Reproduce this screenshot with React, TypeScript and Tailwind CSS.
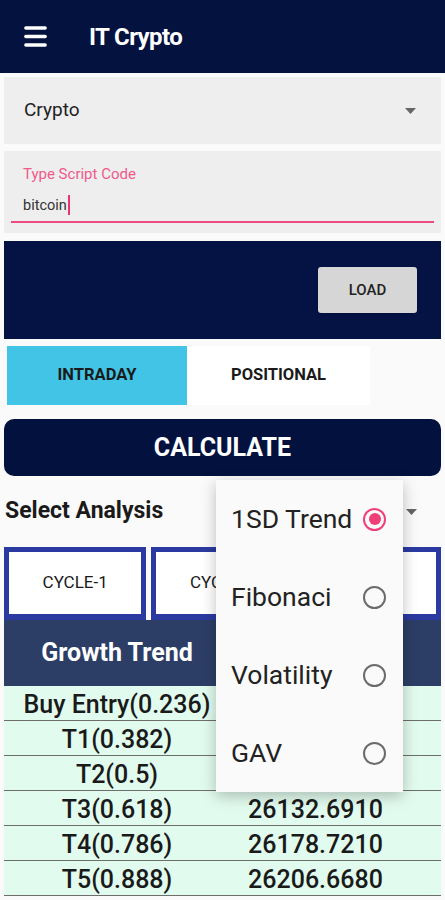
import { Menu } from 'lucide-react';

const rows = [
  { label: 'Buy Entry(0.236)', value: '' },
  { label: 'T1(0.382)', value: '' },
  { label: 'T2(0.5)', value: '' },
  { label: 'T3(0.618)', value: '26132.6910' },
  { label: 'T4(0.786)', value: '26178.7210' },
  { label: 'T5(0.888)', value: '26206.6680' },
];

const options = ['1SD Trend', 'Fibonaci', 'Volatility', 'GAV'];

function Caret() {
  return (
    <svg width="11" height="6" viewBox="0 0 11 6" className="text-[#666]">
      <path d="M0 0h11L5.5 6z" fill="currentColor" />
    </svg>
  );
}

function Radio({ checked }: { checked: boolean }) {
  return checked ? (
    <span className="flex h-[23px] w-[23px] shrink-0 items-center justify-center rounded-full border-2 border-[#ee3f78]">
      <span className="h-[12px] w-[12px] rounded-full bg-[#ee3f78]" />
    </span>
  ) : (
    <span className="h-[23px] w-[23px] shrink-0 rounded-full border-2 border-[#6b6b6b]" />
  );
}

export default function App() {
  return (
    <div className="relative min-h-[900px] bg-[#fafafa] font-['Roboto',sans-serif]">
      <header className="flex h-[73px] items-center bg-[#03123f] pl-[21px] text-white">
        <Menu size={29} strokeWidth={2.8} />
        <h1 className="ml-[39px] text-[24px] font-bold tracking-tight">IT Crypto</h1>
      </header>

      <div className="mx-1 mt-1 flex h-[67px] items-center justify-between bg-[#eeeeee] pl-5 pr-[25px]">
        <span className="text-[19px] text-[#222]">Crypto</span>
        <Caret />
      </div>

      <div className="mx-1 mt-[7px] h-[82px] bg-[#eeeeee] px-[7px] pt-[12px]">
        <div className="pl-[12px] text-[15px] text-[#ef5a8b]">Type Script Code</div>
        <div className="mt-[9px] flex items-center pl-[12px] text-[14.5px] text-[#333]">
          bitcoin<span className="ml-px h-[20px] w-[2px] bg-[#e8336f]" />
        </div>
        <div className="mt-[5px] h-[2px] bg-[#ec4a80]" />
      </div>

      <div className="mx-1 mt-2 flex h-[98px] items-center justify-end bg-[#041344] pr-6">
        <button className="h-[46px] w-[99px] rounded-[3px] bg-[#d6d6d6] text-[15px] font-medium text-[#222] shadow">LOAD</button>
      </div>

      <div className="mx-[7px] mt-[7px] flex h-[59px]">
        <div className="flex w-[180px] items-center justify-center bg-[#41c4e5] text-[16.5px] font-bold text-[#1a1a1a]">INTRADAY</div>
        <div className="flex w-[183px] items-center justify-center bg-white text-[16.5px] font-bold text-[#1a1a1a]">POSITIONAL</div>
      </div>

      <button className="mx-1 mt-[14px] flex h-[57px] w-[437px] items-center justify-center rounded-[10px] bg-[#03113f] text-[25px] font-bold text-white">CALCULATE</button>

      <div className="flex h-[71px] items-center justify-between pl-[5px] pr-[28px]">
        <span className="text-[23px] font-bold text-[#1a1a1a]">Select Analysis</span>
        <Caret />
      </div>

      <div className="mx-1 grid h-[73px] grid-cols-3 gap-[5px]">
        {['CYCLE-1', 'CYCLE-2', 'CYCLE-3'].map(c => (
          <div key={c} className="bg-[#2a3aa0] px-[5px] pt-[5px] pb-[6px]">
            <div className="flex h-full items-center justify-center bg-white text-[17px] text-[#1a1a1a]">{c}</div>
          </div>
        ))}
      </div>

      <div className="mx-1 grid h-[66px] grid-cols-[226px_1fr] items-center bg-[#2d3e66] text-white">
        <span className="text-center text-[25px] font-bold">Growth Trend</span>
        <span />
      </div>

      <div className="mx-1">
        {rows.map(r => (
          <div key={r.label} className="grid h-[35px] grid-cols-[226px_171px] items-center border-b-[1.5px] border-[#6e6e6e] bg-[#e1fbee] text-[25px] font-medium text-[#1a1a1a]">
            <span className="text-center whitespace-nowrap">{r.label}</span>
            <span className="text-center">{r.value}</span>
          </div>
        ))}
      </div>

      <div className="absolute left-[216px] top-[480px] w-[187px] bg-[#fafafa] shadow-[0_4px_14px_rgba(0,0,0,0.25)]">
        {options.map((o, i) => (
          <div key={o} className="flex h-[78px] items-center justify-between pl-[15px] pr-[17px] text-[26.5px] text-[#222]">
            <span>{o}</span>
            <Radio checked={i === 0} />
          </div>
        ))}
      </div>
    </div>
  );
}
